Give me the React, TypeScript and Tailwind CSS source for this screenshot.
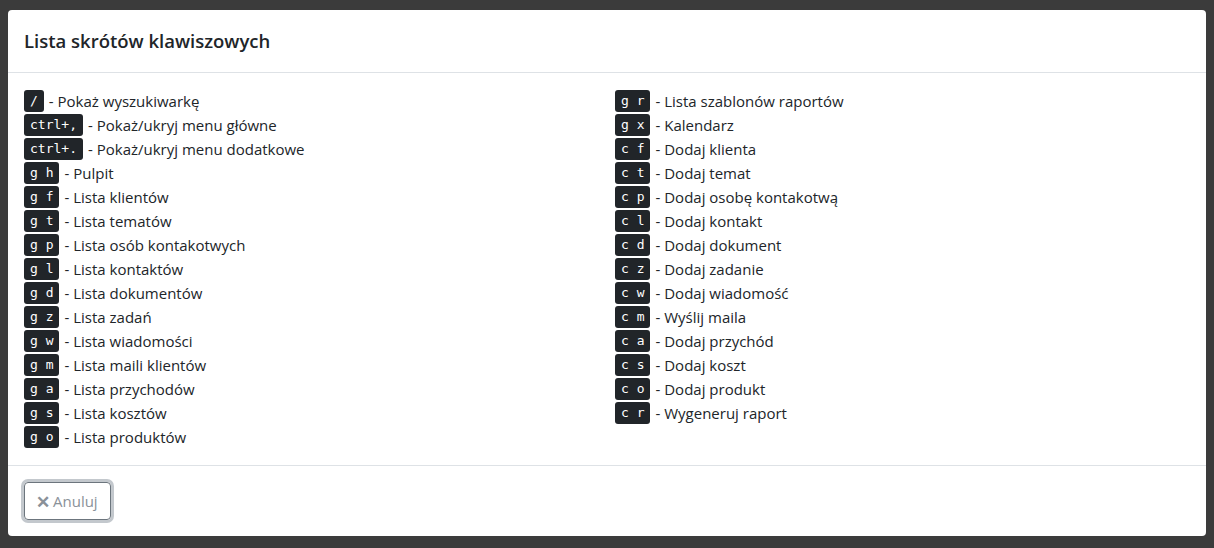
const left: [string, string][] = [
  ['/', 'Pokaż wyszukiwarkę'],
  ['ctrl+,', 'Pokaż/ukryj menu główne'],
  ['ctrl+.', 'Pokaż/ukryj menu dodatkowe'],
  ['g h', 'Pulpit'],
  ['g f', 'Lista klientów'],
  ['g t', 'Lista tematów'],
  ['g p', 'Lista osób kontakotwych'],
  ['g l', 'Lista kontaktów'],
  ['g d', 'Lista dokumentów'],
  ['g z', 'Lista zadań'],
  ['g w', 'Lista wiadomości'],
  ['g m', 'Lista maili klientów'],
  ['g a', 'Lista przychodów'],
  ['g s', 'Lista kosztów'],
  ['g o', 'Lista produktów'],
];

const right: [string, string][] = [
  ['g r', 'Lista szablonów raportów'],
  ['g x', 'Kalendarz'],
  ['c f', 'Dodaj klienta'],
  ['c t', 'Dodaj temat'],
  ['c p', 'Dodaj osobę kontakotwą'],
  ['c l', 'Dodaj kontakt'],
  ['c d', 'Dodaj dokument'],
  ['c z', 'Dodaj zadanie'],
  ['c w', 'Dodaj wiadomość'],
  ['c m', 'Wyślij maila'],
  ['c a', 'Dodaj przychód'],
  ['c s', 'Dodaj koszt'],
  ['c o', 'Dodaj produkt'],
  ['c r', 'Wygeneruj raport'],
];

function Shortcut({ keys, label }: { keys: string; label: string }) {
  return (
    <div className="h-6 flex items-center whitespace-nowrap">
      <kbd className="bg-[#212529] text-white rounded-[3px] px-[6px] h-[22px] flex items-center text-[13px] font-['DejaVu_Sans_Mono',monospace] whitespace-pre">
        {keys}
      </kbd>
      <span className="ml-[5px]">- {label}</span>
    </div>
  );
}

export default function App() {
  return (
    <div className="w-[1214px] h-[548px] bg-[#3b3b3b] pt-[10px] pl-[8px] font-['Open_Sans',sans-serif] text-[#212529] overflow-hidden">
      <div className="w-[1198px] h-[526px] bg-white rounded-[4px] flex flex-col">
        <div className="h-[63px] border-b border-[#dee2e6] px-4 flex items-center">
          <h5 className="text-[18.5px] font-semibold">Lista skrótów klawiszowych</h5>
        </div>

        <div className="p-4 grid grid-cols-[591px_1fr] text-[15px]">
          <div>
            {left.map(([k, l]) => (
              <Shortcut key={k} keys={k} label={l} />
            ))}
          </div>
          <div>
            {right.map(([k, l]) => (
              <Shortcut key={k} keys={k} label={l} />
            ))}
          </div>
        </div>

        <div className="border-t border-[#dee2e6] px-4 pt-[16px]">
          <button className="h-[38px] pl-[11px] pr-[12px] rounded-[4px] border border-[#6c757d] ring-[3px] ring-[#c3c8cd] text-[#8a9199] text-[15px] flex items-center gap-[3px]">
            <span className="text-[17px] font-bold leading-none">✕</span>
            <span>Anuluj</span>
          </button>
        </div>
      </div>
    </div>
  );
}
